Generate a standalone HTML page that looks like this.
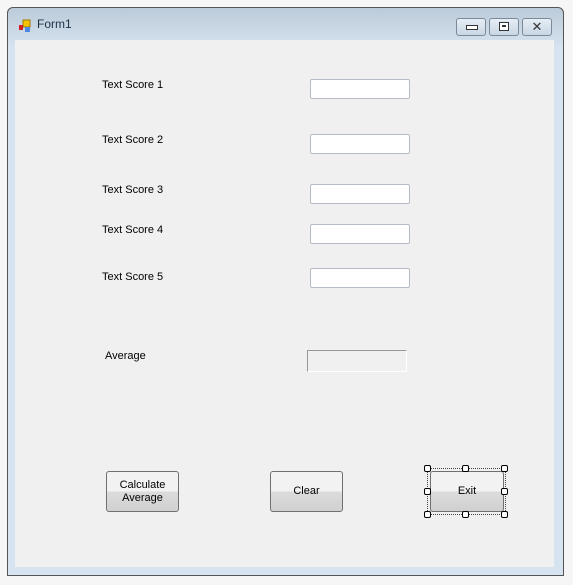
<!DOCTYPE html>
<html><head><style>
body{margin:0;width:573px;height:585px;background:#f6f6f6;position:relative;font-family:"Liberation Sans",sans-serif;font-size:11px;overflow:hidden}
.win{position:absolute;left:7px;top:7px;width:555px;height:567px;border:1px solid #555;border-radius:6px 6px 0 0;background:linear-gradient(#bccbd9,#d6e3f0 40px,#d6e3f0)}
.client{position:absolute;left:15px;top:40px;width:539px;height:527px;background:#f0f0f0}
.title{position:absolute;left:37px;top:17px;font-size:12px;color:#1e3246}
.tb{position:absolute;top:18px;width:28px;height:16px;border:1px solid #7a8a9a;border-radius:3px;background:linear-gradient(#e6eef6,#c8d6e4)}
.lbl{position:absolute;left:102px}
.tx{position:absolute;left:310px;width:98px;height:18px;border:1px solid #b6bcc6;background:#fff;border-radius:2px}
.btn{position:absolute;top:471px;width:71px;height:39px;border:1px solid #707070;border-radius:3px;background:linear-gradient(#f2f2f2 50%,#dcdcdc 50%,#d0d0d0);text-align:center;display:flex;align-items:center;justify-content:center;line-height:13px}
.h{position:absolute;width:5px;height:5px;border:1px solid #000;background:#fff;border-radius:2px}
</style></head><body>
<div class="win"></div>
<div class="client"></div>
<svg style="position:absolute;left:18px;top:19px" width="14" height="14"><rect x="5" y="1" width="7" height="7" fill="#f5c400" stroke="#a07800"/><rect x="1" y="6" width="4" height="5" fill="#d02020"/><rect x="7" y="8" width="5" height="5" fill="#4a8ae0"/></svg>
<div class="title">Form1</div>
<div class="tb" style="left:456px"><div style="position:absolute;left:9px;top:6px;width:10px;height:3px;border:1px solid #333;background:#fff"></div></div>
<div class="tb" style="left:489px"><div style="position:absolute;left:9px;top:3px;width:8px;height:7px;border:1px solid #333;background:#fff"></div><div style="position:absolute;left:12px;top:6px;width:4px;height:2px;background:#333"></div></div>
<div class="tb" style="left:522px;text-align:center;line-height:16px;font-size:13px;color:#333">✕</div>
<div class="lbl" style="top:79px">Text Score 1</div>
<div class="lbl" style="top:134px">Text Score 2</div>
<div class="lbl" style="top:184px">Text Score 3</div>
<div class="lbl" style="top:224px">Text Score 4</div>
<div class="lbl" style="top:271px">Text Score 5</div>
<div class="lbl" style="top:350px;left:105px">Average</div>
<div class="tx" style="top:79px"></div>
<div class="tx" style="top:134px"></div>
<div class="tx" style="top:184px"></div>
<div class="tx" style="top:224px"></div>
<div class="tx" style="top:268px"></div>
<div class="tx" style="top:350px;left:307px;height:20px;background:#f0f0f0;border-color:#999 #fff #fff #999;border-radius:0"></div>
<div class="btn" style="left:106px">Calculate<br>Average</div>
<div class="btn" style="left:270px">Clear</div>
<div class="btn" style="left:430px;width:72px">Exit</div>
<div style="position:absolute;left:427px;top:468px;width:77px;height:45px;border:1px dotted #444"></div>
<div class="h" style="left:424px;top:465px"></div><div class="h" style="left:462px;top:465px"></div><div class="h" style="left:501px;top:465px"></div>
<div class="h" style="left:424px;top:488px"></div><div class="h" style="left:501px;top:488px"></div>
<div class="h" style="left:424px;top:511px"></div><div class="h" style="left:462px;top:511px"></div><div class="h" style="left:501px;top:511px"></div>
</body></html>
